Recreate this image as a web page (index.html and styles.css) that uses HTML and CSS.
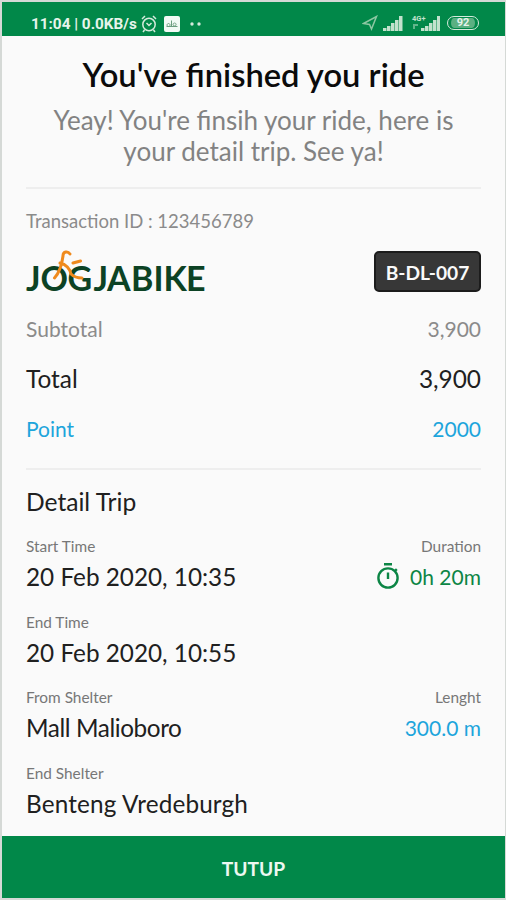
FILE: index.html
```html
<!DOCTYPE html>
<html lang="en">
<head>
<meta charset="utf-8">
<title>Ride summary</title>
<link rel="stylesheet" href="styles.css">
</head>
<body>
<div class="screen">
  <header class="status">
    <div class="status-left">
      <span class="clock">11:04 | 0.0KB/s</span>
      <svg class="alarm" width="16" height="18" viewBox="0 0 16 18" fill="none" stroke="#d5eadc" stroke-width="1.5"><circle cx="8" cy="9.5" r="6.2"/><path d="M1 4l3-3M15 4l-3-3M5.5 8l2.5 2.5L10.5 8M3.5 15L2 17M12.500 15l1.500 2"/></svg>
      <svg class="app" width="16" height="16" viewBox="0 0 16 16"><rect width="16" height="16" rx="2" fill="#f2faf5"/><path d="M2.500 10.500h11M4.500 7.500a1.500 1.500 0 1 0 .1 0M7.500 4.500v6M10.500 7a1.500 1.500 0 1 0 .1 0" fill="none" stroke="#6b9d7e"/></svg>
      <svg class="dots" width="12" height="4" viewBox="0 0 12 4" fill="#d5eadc"><circle cx="2" cy="2" r="1.700"/><circle cx="9" cy="2" r="1.700"/></svg>
    </div>
    <div class="status-right">
      <svg width="16" height="16" viewBox="0 0 16 16" fill="none" stroke="#8cc7a2" stroke-width="1.500"><path d="M1.500 8.500L14.500 1.500L9.500 14L7.500 9.500Z"/></svg>
      <svg class="sig" width="20" height="15" viewBox="0 0 20 15" fill="#c2e2cd"><path d="M0 12h3.500v3H0zM4 10h3.500v5H4zM8 7h3.500v8H8zM12 4h3.500v11H12zM16 0h3.500v15H16z"/></svg>
      <svg class="sig2" width="28" height="16" viewBox="0 0 28 16" fill="#c2e2cd"><text class="net" x="0" y="6">4G+</text><path d="M1 9h5v2H3v3H1z" opacity=".5"/><path d="M9 13h3.500v3H9zM13 11h3.500v5H13zM17 8h3.500v8H17zM21 5h3.500v11H21zM25 1h3v15h-3z"/></svg>
      <span class="battery">92</span>
    </div>
  </header>

  <main class="content">
    <h1 class="title">You've finished you ride</h1>
    <p class="lead"><span>Yeay! You're finsih your ride, here is</span><br><span class="lead-end">your detail trip. See ya!</span></p>
    <hr class="rule">
    <div class="transaction"><span>Transaction ID : 123456789</span></div>
    <div class="brand-row">
      <svg class="logo" width="190" height="46" viewBox="0 0 190 46">
        <text class="wordmark" y="41.500" x="0 14.500 41.500 67.500 81 105 127.500 137.500 160">JOGJABIKE</text>
        <path d="M44 5C42 2 37 2 37 7C36 15 33 24 28.500 29M34 14C40 15 44 20 45 25C48 28 52 29 56 29M47 14L54.500 12" fill="none" stroke="#ef8a1d" stroke-width="3" stroke-linecap="round" stroke-linejoin="round"/>
      </svg>
      <span class="plate">B-DL-007</span>
    </div>
    <div class="row subtotal"><span>Subtotal</span><span>3,900</span></div>
    <div class="row total"><span>Total</span><span>3,900</span></div>
    <div class="row point"><span>Point</span><span>2000</span></div>
    <hr class="rule rule-trip">
    <h2 class="section">Detail Trip</h2>
    <div class="field">
      <div class="label"><span>Start Time</span><span>Duration</span></div>
      <div class="value"><span>20 Feb 2020, 10:35</span>
        <span class="duration"><svg width="24" height="28" viewBox="0 0 24 28" fill="none" stroke="#0c8545" stroke-width="2.400"><circle cx="12" cy="16" r="9.600"/><path d="M8 2.200h8M12 10.500v6.500M18.500 9.500l2.300-2.300"/></svg><span>0h 20m</span></span>
      </div>
    </div>
    <div class="field">
      <div class="label"><span>End Time</span></div>
      <div class="value"><span>20 Feb 2020, 10:55</span></div>
    </div>
    <div class="field">
      <div class="label"><span>From Shelter</span><span>Lenght</span></div>
      <div class="value"><span class="origin">Mall Malioboro</span><span class="length">300.0 m</span></div>
    </div>
    <div class="field">
      <div class="label"><span>End Shelter</span></div>
      <div class="value"><span class="destination">Benteng Vredeburgh</span></div>
    </div>
  </main>
  <button class="close">TUTUP</button>
</div>
</body>
</html>
```
FILE: styles.css
```css
* { box-sizing: border-box; }
body { margin: 0; background: #fafafa; font-family: Lato, "Liberation Sans", sans-serif; }
.screen { width: 506px; height: 900px; display: flex; flex-direction: column; background: #fafafa; border: 1px solid #d5d9d6; border-width: 2px 1px 2px 2px; overflow: hidden; }
.status { height: 34px; flex: none; background: #018849; color: #e6f4eb; display: flex; justify-content: space-between; padding: 7px 26px 0 29px; }
.status-left, .status-right { display: flex; align-items: center; height: 28px; }
.clock { font: 700 15.3px/28px Roboto, sans-serif; white-space: nowrap; }
.status-left { padding-top: 1px; }
.alarm { margin-left: 4px; }
.app { margin-left: 7px; }
.dots { margin-left: 10px; }
.sig { margin-left: 5px; }
.sig2 { margin-left: 9px; overflow: visible; }
.net { font: 700 7.5px Roboto, sans-serif; }
.battery { width: 32px; height: 14px; margin-left: 7px; border: 1.5px solid #d5eadc; border-radius: 7px; background: #5bb082; background-clip: content-box; padding: 1px 3px; font: 700 11px/10px Roboto, sans-serif; text-align: center; }
.content { flex: 1; padding: 19px 24px 0; }
.title { margin: 0; font-size: 32.7px; line-height: 40px; font-weight: 600; color: #0b0b0b; text-align: center; white-space: nowrap; }
.lead { margin: 10px 0 0; font-size: 26px; line-height: 31px; color: #828282; text-align: center; white-space: nowrap; }
.rule { height: 2px; margin: 20px 0 0; border: 0; background: #eeeeee; }
.transaction { height: 28px; margin-top: 18px; font-size: 18.5px; line-height: 28px; color: #8b8b8b; }
.brand-row { height: 46px; margin-top: 14px; display: flex; justify-content: space-between; }
.logo { overflow: visible; }
.wordmark { font: 700 34px Lato, sans-serif; fill: #0c4224; }
.plate { width: 107px; height: 41px; margin-top: 2px; border: 2px solid #1c1c1c; border-radius: 5px; background: #373737; color: #fafafa; font-size: 19.2px; line-height: 39px; font-weight: 700; text-align: center; }
.row { display: flex; justify-content: space-between; height: 50px; line-height: 50px; font-size: 21px; }
.subtotal { margin-top: 9px; color: #8b8b8b; }
.total { font-size: 24.4px; color: #202020; }
.point { color: #1da5dc; }
.rule-trip { margin-top: 14px; }
.section { margin: 15px 0 0; font-size: 24.6px; line-height: 34px; font-weight: 400; color: #202020; }
.field { height: 75.6px; }
.section + .field { margin-top: 15px; }
.label { display: flex; justify-content: space-between; font-size: 15.4px; line-height: 24px; color: #777777; }
.value { display: flex; justify-content: space-between; font-size: 24.3px; line-height: 38px; color: #202020; }
.duration, .length { font-size: 21px; }
.duration { display: flex; align-items: center; gap: 10px; color: #0c8545; }
.duration svg { margin-top: -2px; }
.origin { letter-spacing: -.4px; }
.destination { letter-spacing: .15px; }
.length { color: #1da5dc; }
.close { flex: none; height: 62px; margin: 0; padding: 3px 0 0; border: 0; background: #018849; color: #edf8f1; font: 700 19.2px Lato, sans-serif; text-align: center; }
```
